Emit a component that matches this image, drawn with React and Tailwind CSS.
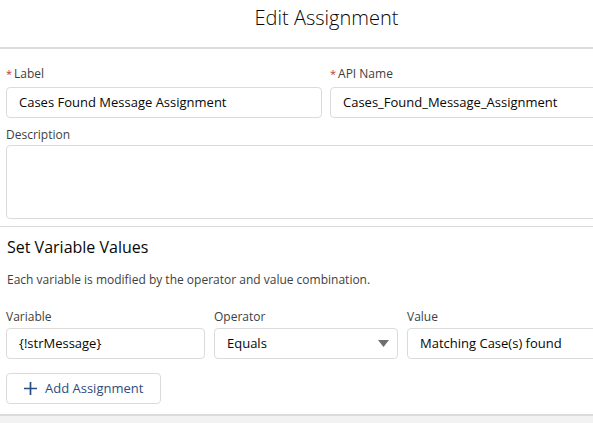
import React from "react";

const font = { fontFamily: '"Open Sans", "Noto Sans", sans-serif' };

function Label({ children, required }) {
  return (
    <div className="flex items-center h-[18px] text-[12px] leading-[18px] text-[#3e3e3c]">
      {required && <span className="text-[#c23934] mr-[2px] text-[11px]">*</span>}
      <span>{children}</span>
    </div>
  );
}

function Input({ value, className = "" }) {
  return (
    <div
      className={`h-[31px] border border-[#dddbda] rounded-[4px] bg-white flex items-center pl-[12px] text-[13px] text-[#080707] whitespace-nowrap overflow-hidden ${className}`}
    >
      {value}
    </div>
  );
}

export default function App() {
  return (
    <div className="w-[593px] h-[423px] bg-white overflow-hidden flex flex-col" style={font}>
      <div className="h-[47px] flex items-start justify-center pt-[4px] text-[20px] leading-[28px] font-light text-[#080707] pl-[60px]">
        Edit Assignment
      </div>
      <div className="h-[2px] bg-[#dddbda] w-full" />
      <div className="w-[800px] pl-[6px] pt-[16px]">
        <div className="flex gap-[8px]">
          <div className="w-[316px] flex flex-col gap-[4px]">
            <Label required>Label</Label>
            <Input value="Cases Found Message Assignment" />
          </div>
          <div className="w-[316px] flex flex-col gap-[4px]">
            <Label required>API Name</Label>
            <Input value="Cases_Found_Message_Assignment" />
          </div>
        </div>
        <div className="mt-[8px] flex flex-col gap-[1px]">
          <Label>Description</Label>
          <div className="h-[74px] w-[640px] border border-[#dddbda] rounded-[4px] bg-white" />
        </div>
      </div>
      <div className="h-[1px] bg-[#dddbda] w-full mt-[7px]" />
      <div className="pl-[7px] pt-[9px]">
        <div className="text-[16px] leading-[22px] text-[#080707]">Set Variable Values</div>
        <div className="mt-[13px] text-[12px] leading-[18px] text-[#3e3e3c]">
          Each variable is modified by the operator and value combination.
        </div>
      </div>
      <div className="w-[800px] pl-[6px] pt-[19px]">
        <div className="flex">
          <div className="w-[199px] flex flex-col gap-[2px]">
            <Label>Variable</Label>
            <Input value="{!strMessage}" />
          </div>
          <div className="w-[184px] ml-[9px] flex flex-col gap-[2px]">
            <Label>Operator</Label>
            <div className="relative">
              <Input value="Equals" />
              <svg
                className="absolute right-[9px] top-[12px]"
                width="11"
                height="7"
                viewBox="0 0 11 7"
              >
                <path d="M0 0 L11 0 L5.5 7 Z" fill="#706e6b" />
              </svg>
            </div>
          </div>
          <div className="w-[250px] ml-[9px] flex flex-col gap-[2px]">
            <Label>Value</Label>
            <Input value="Matching Case(s) found" />
          </div>
        </div>
        <div className="mt-[14px] w-[155px] h-[31px] border border-[#dddbda] rounded-[4px] flex items-center pl-[17px] gap-[8px] text-[13px] text-[#2b4c7e]">
          <svg width="13" height="13" viewBox="0 0 13 13">
            <path d="M6.5 0 V13 M0 6.5 H13" stroke="#2b4c7e" strokeWidth="1.7" />
          </svg>
          <span>Add Assignment</span>
        </div>
      </div>
      <div className="mt-[10px] h-[2px] bg-[#dddbda] w-full" />
      <div className="flex-1 bg-[#f3f2f2]" />
    </div>
  );
}
